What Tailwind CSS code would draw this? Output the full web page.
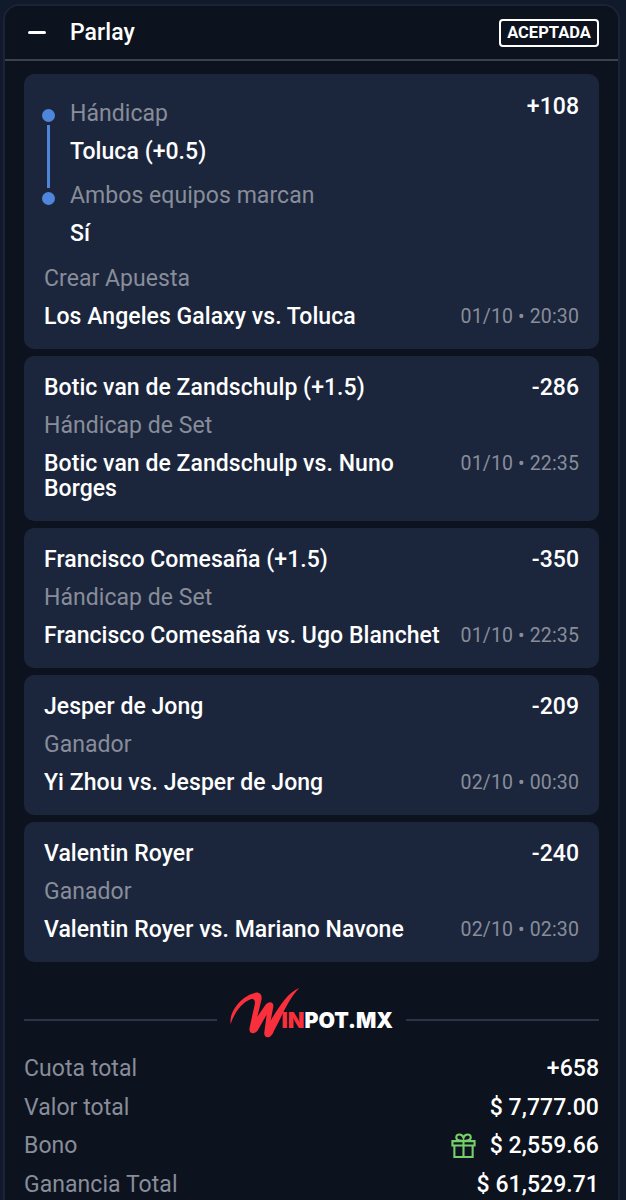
<!DOCTYPE html>
<html lang="es">

<head>
  <meta charset="UTF-8">
  <meta name="viewport" content="width=device-width, initial-scale=1.0">
  <title>Parlay</title>
  <script src="https://cdn.jsdelivr.net/npm/@tailwindcss/browser@4"></script>
</head>

<body class="h-[1200px] overflow-hidden bg-[#111a2b] px-[3px] pt-1 font-['Roboto',sans-serif] text-[23px] leading-[25px] font-medium tracking-[0.05px] text-white">
  <div class="h-[1220px] w-[617px] rounded-t-2xl border-2 border-[#1a2436] bg-[#0c121e]">

    <!-- Header -->
    <header class="flex h-[55px] items-center justify-between border-b-2 border-[#3d434d] pr-[19px] pl-[23px]">
      <div class="flex items-center">
        <span class="h-[3px] w-[18px] rounded-full bg-white"></span>
        <h1 class="ml-[24px]">Parlay</h1>
      </div>
      <span class="flex h-7 w-[100px] items-center justify-center rounded border-2 border-white text-[16.5px] font-bold tracking-normal">ACEPTADA</span>
    </header>

    <main class="px-[19px] pt-[13px]">
      <!-- Bets -->
      <ul class="flex flex-col gap-[6.5px]">
        <li class="h-[275px] rounded-[10px] bg-[#1b263d] px-5 pt-[19.5px]">
          <div class="flex justify-between">
            <div class="flex pt-[7px]">
              <div class="-ml-[2px] flex w-[13px] flex-col items-center pt-[8px]">
                <span class="size-[13px] rounded-full bg-[#4e86dc]"></span>
                <span class="my-[3.5px] h-[63px] w-[3.5px] bg-[#4e86dc]"></span>
                <span class="size-[13px] rounded-full bg-[#4e86dc]"></span>
              </div>
              <div class="ml-[15px]">
                <p class="font-normal text-[#888d99]">Hándicap</p>
                <p class="mt-[13px]">Toluca (+0.5)</p>
                <p class="mt-[19.5px] font-normal text-[#888d99]">Ambos equipos marcan</p>
                <p class="mt-[13px]">Sí</p>
              </div>
            </div>
            <span>+108</span>
          </div>
          <p class="mt-[20px] font-normal text-[#888d99]">Crear Apuesta</p>
          <div class="mt-[13px] flex justify-between">
            <p>Los Angeles Galaxy vs. Toluca</p>
            <span class="text-[19.5px] font-normal tracking-[0.13px] text-[#888d99]">01/10 • 20:30</span>
          </div>
        </li>

        <li class="h-[165.5px] rounded-[10px] bg-[#1b263d] px-5 pt-[19.5px]">
          <div class="flex justify-between"><p>Botic van de Zandschulp (+1.5)</p><span>-286</span></div>
          <p class="mt-[13px] font-normal text-[#888d99]">Hándicap de Set</p>
          <div class="mt-[13px] flex justify-between">
            <p>Botic van de Zandschulp vs. Nuno<br>Borges</p>
            <span class="text-[19.5px] font-normal tracking-[0.13px] text-[#888d99]">01/10 • 22:35</span>
          </div>
        </li>

        <li class="h-[140.5px] rounded-[10px] bg-[#1b263d] px-5 pt-[19.5px]">
          <div class="flex justify-between"><p>Francisco Comesaña (+1.5)</p><span>-350</span></div>
          <p class="mt-[13px] font-normal text-[#888d99]">Hándicap de Set</p>
          <div class="mt-[13px] flex justify-between">
            <p>Francisco Comesaña vs. Ugo Blanchet</p>
            <span class="text-[19.5px] font-normal tracking-[0.13px] text-[#888d99]">01/10 • 22:35</span>
          </div>
        </li>

        <li class="h-[140.5px] rounded-[10px] bg-[#1b263d] px-5 pt-[19.5px]">
          <div class="flex justify-between"><p>Jesper de Jong</p><span>-209</span></div>
          <p class="mt-[13px] font-normal text-[#888d99]">Ganador</p>
          <div class="mt-[13px] flex justify-between">
            <p>Yi Zhou vs. Jesper de Jong</p>
            <span class="text-[19.5px] font-normal tracking-[0.13px] text-[#888d99]">02/10 • 00:30</span>
          </div>
        </li>

        <li class="h-[140.5px] rounded-[10px] bg-[#1b263d] px-5 pt-[19.5px]">
          <div class="flex justify-between"><p>Valentin Royer</p><span>-240</span></div>
          <p class="mt-[13px] font-normal text-[#888d99]">Ganador</p>
          <div class="mt-[13px] flex justify-between">
            <p>Valentin Royer vs. Mariano Navone</p>
            <span class="text-[19.5px] font-normal tracking-[0.13px] text-[#888d99]">02/10 • 02:30</span>
          </div>
        </li>
      </ul>

      <!-- Brand divider -->
      <div class="mt-[23px] flex h-[70px] items-center">
        <span class="h-[1.5px] w-[193px] bg-[#2c3546]"></span>
        <svg class="mr-[12px] ml-[13px] h-[54px] w-[164px] shrink-0 overflow-visible" viewBox="230 993 164 54">
          <path fill="#f9303b" transform="translate(210 970) scale(.3333)" d="M62 162C56 128 92 78 136 68C154 66 158 80 153 95L142 140L164 108C174 92 192 94 190 110L182 152C206 112 232 68 268 54C236 84 216 140 192 182C184 208 160 208 163 186L170 134L146 176C136 196 114 194 119 172L134 104C137 90 130 84 122 88C96 98 74 126 62 162Z"/>
          <text x="281.500" y="1028" textLength="23" lengthAdjust="spacingAndGlyphs" font-family="Inter, sans-serif" font-weight="900" font-size="21.500" letter-spacing="0" fill="#f9303b">IN</text>
          <text x="304.500" y="1028" textLength="88.500" lengthAdjust="spacingAndGlyphs" font-family="Inter, sans-serif" font-weight="900" font-size="21.500" letter-spacing="0" fill="#fff">POT.MX</text>
        </svg>
        <span class="h-[1.5px] flex-1 bg-[#2c3546]"></span>
      </div>

      <!-- Totals -->
      <dl class="mt-[1px] flex flex-col gap-[13.5px]">
        <div class="flex justify-between"><dt class="font-normal text-[#888d99]">Cuota total</dt><dd>+658</dd></div>
        <div class="flex justify-between"><dt class="font-normal text-[#888d99]">Valor total</dt><dd>$ 7,777.00</dd></div>
        <div class="flex justify-between">
          <dt class="font-normal text-[#888d99]">Bono</dt>
          <dd class="flex items-center">
            <svg class="mr-[14px] h-[25px] w-[25px]" viewBox="0 0 25 26" fill="none" stroke="#76cf6b" stroke-width="2.200">
              <path d="M1 8.500H24V13H1ZM3 13V25H22V13M12.500 8.500V25M12.500 8C10 8 5 8.500 5 4.500C5 .5 11 .5 12.500 5C14 .5 20 .5 20 4.500C20 8.500 15 8 12.500 8Z"/>
            </svg>
            $ 2,559.66
          </dd>
        </div>
        <div class="flex justify-between"><dt class="font-normal text-[#888d99]">Ganancia Total</dt><dd>$ 61,529.71</dd></div>
      </dl>
    </main>
  </div>
</body>

</html>
